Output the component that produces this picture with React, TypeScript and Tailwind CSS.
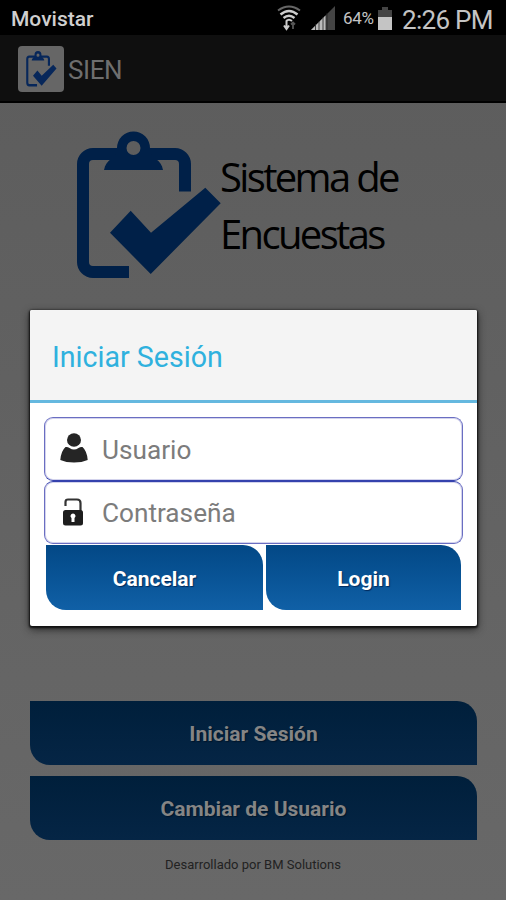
import { useState } from 'react';

const ClipboardCheck = ({ className, stroke = 12 }: { className?: string; stroke?: number }) => (
  <svg viewBox="0 0 146 148" preserveAspectRatio="none" fill="currentColor" className={className}>
    {/* Board */}
    <path d="M52 141H16a10 10 0 0 1-10-10V33a10 10 0 0 1 10-10H42M70 23H98a10 10 0 0 1 10 10V60.500" fill="none" stroke="currentColor" strokeWidth={stroke} />
    {/* Clip */}
    <path
      fillRule="evenodd"
      d="M27 39C28 34 30 31 34 28L40 22V17A16.500 16.500 0 0 1 73 17V22L79 28C83 31 85 34 86 39ZM56.500 10a7 7 0 1 0 0 14a7 7 0 1 0 0-14Z"
    />
    {/* Tick */}
    <path d="M53.700 79.700L74 101.700L128.300 56.700L143.700 72.300L73.700 143L33 101.700Z" />
  </svg>
);

const WifiIcon = () => (
  <svg width="24" height="26" viewBox="0 0 24 26" fill="none" strokeWidth="2">
    <path d="M1 5.500Q12-2.500 23 5.500" stroke="#666" />
    <path d="M3.500 9.500Q12 2.500 20.500 9.500" stroke="#ccc" strokeWidth="2.5" />
    <path d="M6.500 13Q12 8.500 17.500 13" stroke="#ccc" strokeWidth="2.3" />
    <path d="M9 16Q12 13.500 15 16" stroke="#ccc" />
    <path d="M9.500 16V23M7 20.500L9.500 24L12 20.500" stroke="#ccc" />
    <path d="M16 24V17M14 19.500L16 17.500L18 19.500" stroke="#555" strokeWidth="1.8" />
  </svg>
);

const SignalIcon = () => (
  <svg width="24" height="24" viewBox="0 0 24 24">
    <path d="M0 24L24 0V24Z" fill="#444" />
    <path d="M0 24L14.500 9.500V24Z" fill="#bbb" />
    <path d="M4.500 18V24M8 15V24M12 11V24M16 7V24" stroke="#222" strokeWidth="0.8" />
  </svg>
);

const BatteryIcon = () => (
  <svg width="14" height="23" viewBox="0 0 14 23">
    <path d="M4 0H10V3H14V10H0V3H4Z" fill="#444" />
    <path d="M0 10H14V23H0Z" fill="#c4c4c4" />
  </svg>
);

const UserIcon = () => (
  <svg width="28" height="30" viewBox="0 0 28 30" fill="#252525">
    <ellipse cx="14" cy="7" rx="7" ry="6.800" />
    <path d="M5.500 14Q7.500 13.500 9.500 15Q14 18 18.500 15Q20.500 13.500 22.500 14Q27 18 27.700 27Q22 29.500 14 29.500Q6 29.500 0.300 27Q1 18 5.500 14Z" />
  </svg>
);

const LockIcon = () => (
  <svg width="20" height="28" viewBox="0 0 20 28">
    <path d="M2.500 8V4Q2.500 1.500 5 1.500H14Q17.500 1.500 17.500 5V13" fill="none" stroke="#333" strokeWidth="2.200" />
    <rect y="12" width="20" height="15.500" rx="2.500" fill="#1d1d1d" />
    <path d="M10 15.500a2.500 2.500 0 0 1 1.500 4.500V24H8.500V20A2.500 2.500 0 0 1 10 15.500Z" fill="#fff" />
  </svg>
);

const homeButtons = ['Iniciar Sesión', 'Cambiar de Usuario'];

const App = () => {
  const [user, setUser] = useState('');
  const [password, setPassword] = useState('');

  const inputClass =
    'min-w-0 flex-1 bg-transparent pt-[3px] text-[26.2px] text-[#555] outline-none placeholder:text-[#7c7c7c] placeholder:opacity-100';
  const fieldClass =
    'flex items-center rounded-[9px] border border-[#6a6ec2] shadow-[inset_0_0_0_1px_#d3d3ec]';
  const dialogButtonClass =
    'h-[65px] rounded-bl-[20px] rounded-tr-[20px] bg-linear-to-b from-[#034886] to-[#1060a6] pt-[4px] text-[21px] font-bold text-white text-shadow-[1px_1px_1px_#002a5c]';

  return (
    <div className="relative flex h-[900px] w-[506px] flex-col overflow-hidden bg-linear-to-b from-[#5c5c5c] to-[#686868] font-['Roboto',sans-serif]">
      {/* Status bar */}
      <div className="flex h-[35px] shrink-0 items-center bg-black pl-[11px] pr-[13px] text-[#c4c4c4]">
        <span className="pt-[4px] text-[21px] font-medium text-[#cfcfcf]">Movistar</span>
        <div className="ml-auto flex items-center pt-px">
          <WifiIcon />
          <div className="ml-[10px]"><SignalIcon /></div>
          <span className="ml-[8px] w-[31px] whitespace-nowrap pt-[2px] text-[17px] tracking-[-0.3px]">64%</span>
          <div className="ml-1"><BatteryIcon /></div>
          <span className="ml-[10px] w-[91px] whitespace-nowrap pt-[3px] text-[26px] leading-none tracking-[-0.7px]">2:26 PM</span>
        </div>
      </div>

      {/* Action bar */}
      <header className="flex h-[68px] shrink-0 items-center border-b-2 border-black bg-[#0f0f0f] pl-[18px] pt-[2px]">
        <div className="flex h-[46px] w-[46px] items-center justify-center rounded-[4px] bg-[#666]">
          <ClipboardCheck className="h-[36px] w-[31px] text-[#07275a]" stroke={10} />
        </div>
        <h1 className="ml-[4px] pt-[3px] text-[26px] tracking-[-0.4px] text-[#6e6e6e]">SIEN</h1>
      </header>

      {/* Logo */}
      <div className="flex pl-[77px] pt-[28px]">
        <ClipboardCheck className="h-[148px] w-[146px] shrink-0 text-[#002048]" />
        <p className="-ml-[3px] pt-[17px] font-['Open_Sans',sans-serif] text-[40px] leading-[57px] tracking-[-2.65px] whitespace-nowrap text-black">
          Sistema de
          <br />
          Encuestas
        </p>
      </div>

      <div className="mt-auto flex flex-col gap-[11px] pl-[30px] pr-[29px]">
        {homeButtons.map((label) => (
          <button
            key={label}
            className="h-[64px] rounded-bl-[20px] rounded-tr-[20px] bg-linear-to-b from-[#001f3b] to-[#052545] pt-[3px] text-[21px] font-bold text-[#858585] text-shadow-[1px_1px_1px_#00152a]"
          >
            {label}
          </button>
        ))}
      </div>
      <p className="mb-[25px] mt-[14px] text-center text-[13px] leading-[21px] text-[#222]">Desarrollado por BM Solutions</p>

      {/* Login dialog */}
      <div className="absolute left-[30px] top-[310px] flex h-[316px] w-[447px] flex-col rounded-[2px] bg-white shadow-[0_1px_2px_1px_#111,0_3px_8px_#222]">
        <h2 className="flex h-[93px] shrink-0 items-center rounded-t-[2px] border-b-[3px] border-[#65b8df] bg-[#f4f4f4] pl-[22px] pt-[4px] text-[28.600px] text-[#2fb1de]">
          Iniciar Sesión
        </h2>
        <div className="flex flex-col px-[14px] pt-[14px]">
          <label className={`h-[64px] border-b-[#3542ad] pl-[15px] ${fieldClass}`}>
            <div className="-mt-[2px]"><UserIcon /></div>
            <input className={`ml-[14px] ${inputClass}`} placeholder="Usuario" value={user} onChange={(e) => setUser(e.target.value)} />
          </label>
          <label className={`h-[63px] border-t-[#3542ad] pl-[18px] ${fieldClass}`}>
            <div className="-mt-[2px]"><LockIcon /></div>
            <input className={`ml-[19px] ${inputClass}`} type="text" placeholder="Contraseña" value={password} onChange={(e) => setPassword(e.target.value)} />
          </label>
        </div>
        <div className="flex gap-[3px] px-4 pt-px">
          <button className={`w-[217px] ${dialogButtonClass}`}>Cancelar</button>
          <button className={`flex-1 ${dialogButtonClass}`}>Login</button>
        </div>
      </div>
    </div>
  );
};

export default App;
